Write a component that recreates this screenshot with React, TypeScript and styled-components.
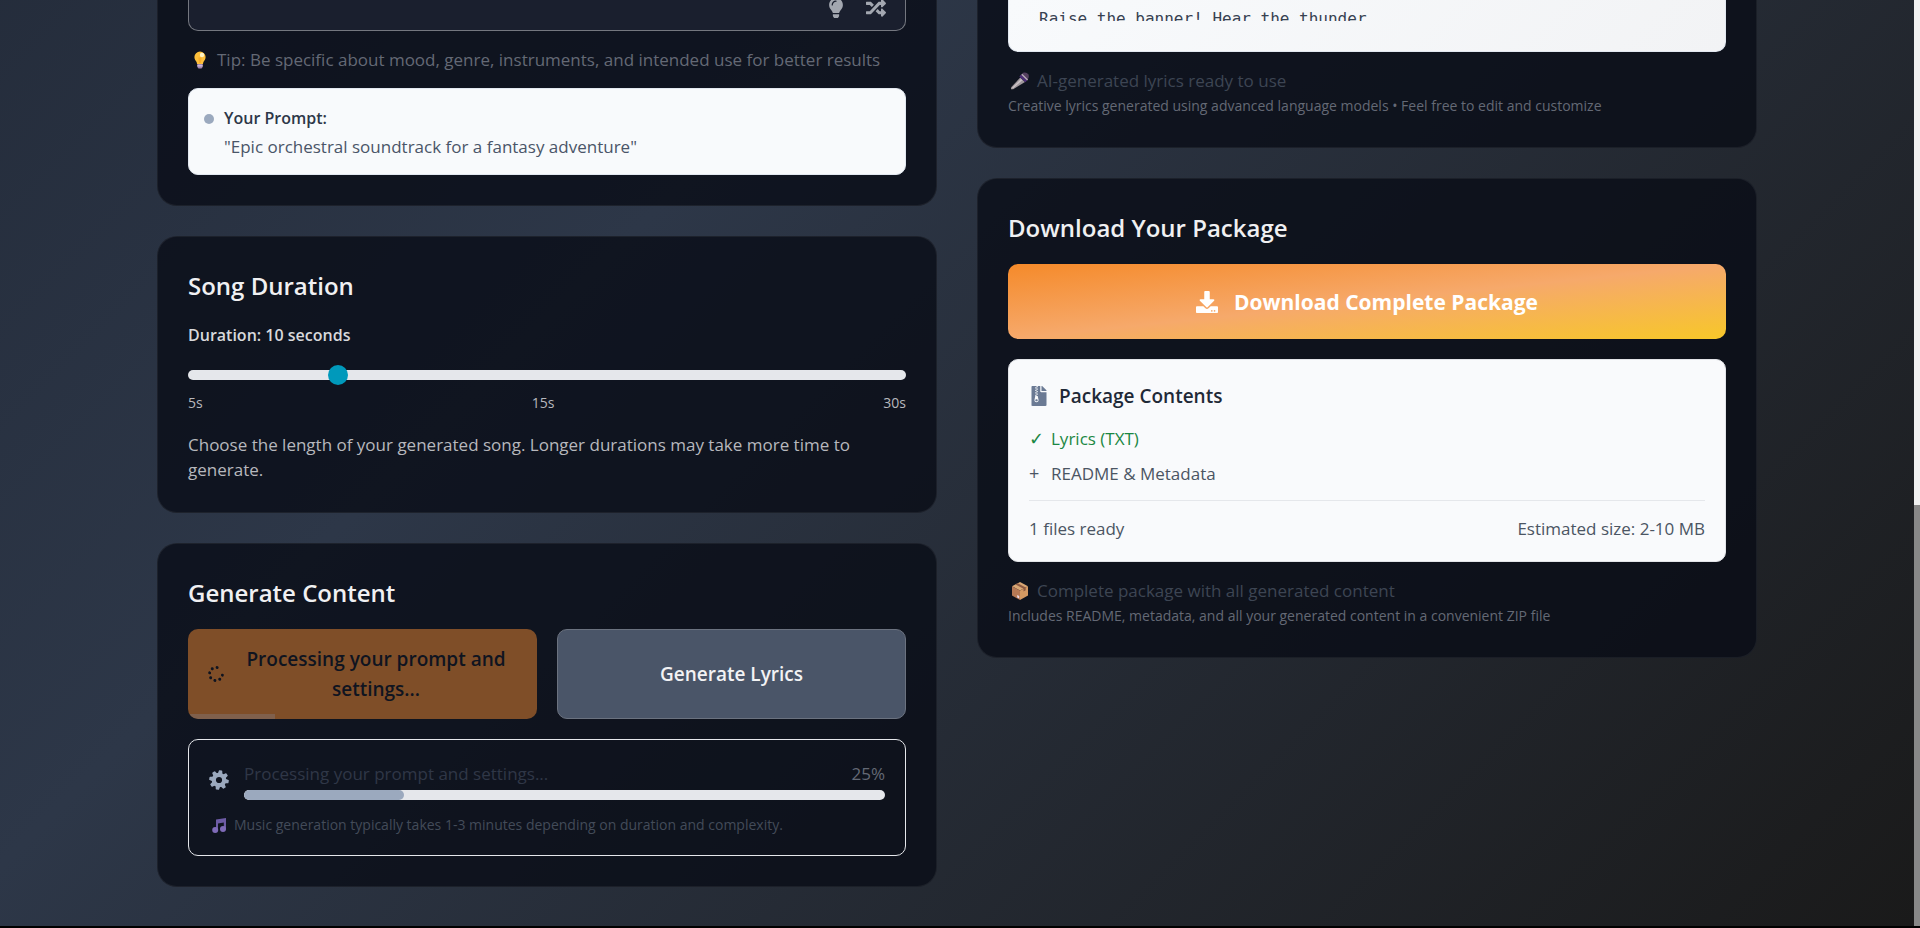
import React, { useState } from 'react';
import styled, { createGlobalStyle } from 'styled-components';
import { FaDownload, FaFileArchive, FaLightbulb, FaRandom, FaSpinner } from 'react-icons/fa';

const GlobalStyle = createGlobalStyle`
  *, *::before, *::after { box-sizing: border-box; }
  body {
    margin: 0;
    background: #000;
    color: #f0f0f2;
    font-family: 'Open Sans', 'Noto Sans', sans-serif;
    font-size: 17px;
    line-height: 27px;
  }
  h2, h3, p, ul { margin: 0; padding: 0; }
  button, input, textarea { font: inherit; margin: 0; }
`;

const Shell = styled.div`
  display: flex;
  height: 100vh;
  padding-bottom: 2px;
  overflow: hidden;
`;

const Page = styled.main`
  flex: 1;
  min-width: 0;
  padding: 0 40px 40px;
  background: linear-gradient(135deg, #1a202c 0%, #2d3748 50%, #1a1a1a 100%) left bottom / 100% 2032px;
`;

const ScrollTrack = styled.div`
  display: flex;
  flex-direction: column;
  justify-content: flex-end;
  width: 6px;
  background: #f1f1f1;
`;

const ScrollThumb = styled.div`
  height: 45.5%;
  background: #888;
`;

const Columns = styled.div`
  display: grid;
  grid-template-columns: repeat(2, minmax(0, 1fr));
  gap: 40px;
  align-items: start;
  max-width: 1600px;
  margin: 0 auto;
`;

const Column = styled.div`
  display: flex;
  flex-direction: column;
  gap: 30px;
`;

const Card = styled.section<{ $continued?: boolean }>`
  padding: ${(p) => (p.$continued ? '0 30px 30px' : '30px')};
  background: rgba(9, 12, 23, 0.8);
  border: 1px solid rgba(255, 255, 255, 0.06);
  border-top-width: ${(p) => (p.$continued ? '0' : '1px')};
  border-radius: ${(p) => (p.$continued ? '0 0 20px 20px' : '20px')};
`;

const CardTitle = styled.h2`
  margin-bottom: 18px;
  font-size: 24px;
  line-height: 37px;
  font-weight: 600;
`;

const PromptField = styled.div`
  position: relative;
  height: 31px;
`;

const PromptInput = styled.textarea`
  display: block;
  width: 100%;
  height: 100%;
  padding: 0 16px;
  resize: none;
  color: #f0f0f2;
  background: #1a1f2e;
  border: 1px solid #74777f;
  border-top: 0;
  border-radius: 0 0 10px 10px;
  outline: none;
`;

const PromptTools = styled.div`
  position: absolute;
  right: 20px;
  bottom: 13px;
  display: flex;
  gap: 20px;
`;

const ToolButton = styled.button`
  display: flex;
  justify-content: center;
  width: 20px;
  padding: 0;
  color: #a3a7b0;
  background: none;
  border: 0;
  font-size: 20px;
`;

const Note = styled.p<{ $color: string }>`
  display: flex;
  align-items: center;
  gap: 7px;
  margin-top: 15px;
  padding-left: 2px;
  color: ${(p) => p.$color};
`;

const SubNote = styled.p`
  margin-top: 1px;
  font-size: 14px;
  line-height: 22px;
  color: #646975;
`;

const PromptPreview = styled.div`
  display: flex;
  gap: 10px;
  margin-top: 15px;
  padding: 15px 15px 13px;
  line-height: 28px;
  color: #4a5568;
  background: #f8fafc;
  border: 1px solid #e2e8f0;
  border-radius: 10px;
`;

const Dot = styled.span`
  width: 10px;
  height: 10px;
  margin-top: 10px;
  border-radius: 50%;
  background: #9ba9be;
`;

const PreviewText = styled.div`
  display: flex;
  flex-direction: column;
  gap: 1px;
`;

const PreviewLabel = styled.span`
  font-size: 16px;
  font-weight: 600;
  color: #2d3748;
`;

const DurationLabel = styled.label`
  display: block;
  margin-bottom: 16px;
  font-size: 16px;
  font-weight: 600;
  color: #d8d9dc;
`;

const Slider = styled.input`
  display: block;
  width: 100%;
  height: 20px;
  appearance: none;
  background: none;
  &::-webkit-slider-runnable-track {
    height: 10px;
    border-radius: 5px;
    background: #e5e7eb;
  }
  &::-webkit-slider-thumb {
    appearance: none;
    width: 20px;
    height: 20px;
    margin-top: -5px;
    border-radius: 50%;
    background: #0099bb;
  }
`;

const Ticks = styled.div`
  display: flex;
  justify-content: space-between;
  margin-top: 7px;
  font-size: 14px;
  line-height: 21px;
  color: #b7b8bd;
`;

const Help = styled.p`
  margin-top: 19px;
  line-height: 25px;
  color: #b7b8bd;
`;

const Actions = styled.div`
  display: grid;
  grid-template-columns: 1fr 1fr;
  gap: 20px;
`;

const ActionButton = styled.button<{ $busy?: boolean }>`
  position: relative;
  display: flex;
  align-items: center;
  justify-content: center;
  gap: 11px;
  min-height: 90px;
  padding: 15px 20px;
  overflow: hidden;
  font-size: 19px;
  line-height: 30px;
  font-weight: 600;
  color: ${(p) => (p.$busy ? '#0f1420' : '#f2f2f4')};
  background: ${(p) => (p.$busy ? '#7f4e28' : '#4a5568')};
  border: ${(p) => (p.$busy ? '0' : '1px solid #6b727f')};
  border-radius: 10px;
`;

const BusyIcon = styled(FaSpinner)`
  flex: none;
  width: 16px;
  height: 16px;
  transform: rotate(10deg);
`;

const BusyLabel = styled.span`
  flex: 1;
`;

const ButtonProgress = styled.span`
  position: absolute;
  left: 0;
  bottom: 0;
  height: 5px;
  background: rgba(130, 125, 130, 0.4);
`;

const StatusBox = styled.div`
  margin-top: 20px;
  padding: 20px;
  border: 1px solid #e5e7eb;
  border-radius: 10px;
`;

const StatusRow = styled.div`
  display: flex;
  align-items: center;
  gap: 15px;
`;

const StatusBody = styled.div`
  flex: 1;
`;

const StatusLine = styled.div`
  display: flex;
  justify-content: space-between;
  margin-bottom: 3px;
  color: #646975;
`;

const StatusText = styled.span`
  font-weight: 500;
  color: #2f3747;
`;

const Bar = styled.div`
  height: 10px;
  overflow: hidden;
  border-radius: 5px;
  background: #e5e7eb;
`;

const BarFill = styled.div`
  height: 100%;
  border-radius: 5px;
  background: #9ba9be;
`;

const StatusHint = styled.p`
  display: flex;
  align-items: center;
  gap: 8px;
  margin-top: 15px;
  padding-left: 3px;
  font-size: 14px;
  line-height: 20px;
  color: #434b59;
`;

const LyricsBox = styled.div`
  padding: 0 30px 30px;
  background: linear-gradient(135deg, #f8fafc, #f2f3f5);
  border: 1px solid #e2e8f0;
  border-top: 0;
  border-radius: 0 0 10px 10px;
`;

const Lyrics = styled.pre`
  display: flex;
  align-items: flex-start;
  height: 21px;
  margin: 0;
  padding-top: 7px;
  overflow: hidden;
  font-family: 'DejaVu Sans Mono', 'Liberation Mono', monospace;
  font-size: 16px;
  line-height: 24px;
  color: #374151;
`;

const DownloadButton = styled.button`
  display: flex;
  align-items: center;
  justify-content: center;
  gap: 16px;
  width: 100%;
  height: 75px;
  font-size: 21px;
  line-height: 30px;
  font-weight: 700;
  color: #fff;
  background: linear-gradient(to bottom right, #f58a2a, #f6a96b, #f7c729);
  border: 0;
  border-radius: 10px;
`;

const DownloadIcon = styled(FaDownload)`
  width: 22px;
  height: 22px;
`;

const PackageBox = styled.div`
  margin-top: 20px;
  padding: 20px;
  color: #4b5563;
  background: #f9fafc;
  border: 1px solid #e2e4e8;
  border-radius: 10px;
`;

const PackageTitle = styled.h3`
  display: flex;
  align-items: center;
  gap: 10px;
  margin-bottom: 13px;
  font-size: 19px;
  line-height: 32px;
  font-weight: 600;
  color: #1f2937;
`;

const ZipIcon = styled(FaFileArchive)`
  width: 20px;
  height: 20px;
  color: #6b7a94;
`;

const FileList = styled.ul`
  display: flex;
  flex-direction: column;
  gap: 8px;
  list-style: none;
`;

const FileItem = styled.li<{ $ready?: boolean }>`
  display: flex;
  gap: 8px;
  color: ${(p) => (p.$ready ? '#1b8743' : 'inherit')};
`;

const Mark = styled.span`
  width: 14px;
  font-size: 18px;
  font-family: 'Open Sans', 'DejaVu Sans', sans-serif;
`;

const PackageFooter = styled.div`
  display: flex;
  justify-content: space-between;
  margin-top: 13px;
  padding-top: 15px;
  line-height: 25px;
  border-top: 1px solid #e5e7eb;
`;

const Glyph = styled.svg`
  flex: none;
`;

const TOOTH_ANGLES = [10, 55, 100, 145, 190, 235, 280, 325];

const GearGlyph = () => (
  <Glyph width="20" height="20" viewBox="0 0 20 20" aria-hidden="true">
    <g fill="#9ba9be">
      {TOOTH_ANGLES.map((angle) => (
        <path key={angle} d="M7.700 4 8.300.7Q8.400.2 9 .2h2q.6 0 .7.5L12.300 4z" transform={`rotate(${angle} 10 10)`} />
      ))}
    </g>
    <circle cx="10" cy="10" r="5.200" fill="none" stroke="#9ba9be" strokeWidth="4.200" />
  </Glyph>
);

const BulbGlyph = () => (
  <Glyph width="20" height="18" viewBox="0 0 20 18" aria-hidden="true">
    <path d="M10 0.5a5.6 5.6 0 0 0-5.6 5.6c0 2.2 1.2 3.3 2 4.6.5.8.6 1.5.6 2.3h6c0-.8.1-1.5.6-2.3.8-1.3 2-2.4 2-4.6A5.6 5.6 0 0 0 10 .5z" fill="#fdbf3b" />
    <path d="M8.3 6.5h3.4l-.8 5.5H9.1z" fill="#f39b1d" opacity=".55" />
    <circle cx="12" cy="4" r="2.2" fill="#fff3c4" />
    <path d="M7.3 13h5.4v3l-1.2 1.5h-3L7.3 16z" fill="#a487b0" />
    <path d="M7.3 14.3h5.4v1H7.3z" fill="#dccbe3" />
  </Glyph>
);

const MicGlyph = () => (
  <Glyph width="20" height="18" viewBox="0 0 20 18" aria-hidden="true">
    <path d="M1 15.5 10.3 5.5l4.7 4.4L3.2 17.2H1z" fill="#9f979c" />
    <path d="M2 15.8 11 7l1.3 1.2L3 16.5z" fill="#cdc5c9" />
    <path d="M10.3 4.2 13 .8q3.5-1 5.5 1.6.9 2.3-.4 4.3L15.2 10z" fill="#54405f" />
    <path d="m10.8 2.8 6.2 5.8-1.6 1.7-6-5.7z" fill="#4d2d78" />
    <path d="M12.2 1.7 18 7.4l-.8 1-5.9-5.6z" fill="#b9aebb" />
  </Glyph>
);

const BoxGlyph = () => (
  <Glyph width="20" height="18" viewBox="0 0 20 18" aria-hidden="true">
    <path d="M10 0 18 4.3 10 8.6 2 4.3z" fill="#d8a774" />
    <path d="M2 4.3 10 8.6V18l-8-4.5z" fill="#b67955" />
    <path d="M18 4.3 10 8.6V18l8-4.5z" fill="#d49962" />
    <path d="m5.5 2.4 8 4.3v2.8l2.2-1.2V5.5l-8-4.3z" fill="#8d5a42" />
    <path d="m7.2 13 2 1.1v2.5l-2-1.1z" fill="#ecd9e4" />
  </Glyph>
);

const NotesGlyph = () => (
  <Glyph width="14" height="15" viewBox="0 0 14 15" aria-hidden="true">
    <path d="M4 1.5 14 0v11.5h-2.2V4.6L6 5.5V13H4z" fill="#6d5ba5" />
    <circle cx="3.2" cy="12" r="3" fill="#7f6bb8" />
    <circle cx="11" cy="11" r="3" fill="#7f6bb8" />
  </Glyph>
);

const PROGRESS = 25;

export default function App() {
  const [duration, setDuration] = useState(10);
  return (
    <>
      <GlobalStyle />
      <Shell>
        <Page>
          <Columns>
            <Column>
              <Card $continued>
                <PromptField>
                  <PromptInput aria-label="Prompt" />
                  <PromptTools>
                    <ToolButton type="button" aria-label="Suggest an idea"><FaLightbulb /></ToolButton>
                    <ToolButton type="button" aria-label="Random prompt"><FaRandom /></ToolButton>
                  </PromptTools>
                </PromptField>
                <Note $color="#646975">
                  <BulbGlyph />
                  Tip: Be specific about mood, genre, instruments, and intended use for better results
                </Note>
                <PromptPreview>
                  <Dot />
                  <PreviewText>
                    <PreviewLabel>Your Prompt:</PreviewLabel>
                    <span>"Epic orchestral soundtrack for a fantasy adventure"</span>
                  </PreviewText>
                </PromptPreview>
              </Card>

              <Card>
                <CardTitle>Song Duration</CardTitle>
                <DurationLabel htmlFor="duration">Duration: {duration} seconds</DurationLabel>
                <Slider
                  id="duration"
                  type="range"
                  min={5}
                  max={30}
                  value={duration}
                  onChange={(e) => setDuration(Number(e.target.value))}
                />
                <Ticks>
                  <span>5s</span>
                  <span>15s</span>
                  <span>30s</span>
                </Ticks>
                <Help>
                  Choose the length of your generated song. Longer durations may take more time to generate.
                </Help>
              </Card>

              <Card>
                <CardTitle>Generate Content</CardTitle>
                <Actions>
                  <ActionButton type="button" disabled $busy>
                    <BusyIcon />
                    <BusyLabel>Processing your prompt and settings...</BusyLabel>
                    <ButtonProgress style={{ width: `${PROGRESS}%` }} />
                  </ActionButton>
                  <ActionButton type="button">Generate Lyrics</ActionButton>
                </Actions>
                <StatusBox>
                  <StatusRow>
                    <GearGlyph />
                    <StatusBody>
                      <StatusLine>
                        <StatusText>Processing your prompt and settings...</StatusText>
                        <span>{PROGRESS}%</span>
                      </StatusLine>
                      <Bar>
                        <BarFill style={{ width: `${PROGRESS}%` }} />
                      </Bar>
                    </StatusBody>
                  </StatusRow>
                  <StatusHint>
                    <NotesGlyph />
                    Music generation typically takes 1-3 minutes depending on duration and complexity.
                  </StatusHint>
                </StatusBox>
              </Card>
            </Column>

            <Column>
              <Card $continued>
                <LyricsBox>
                  <Lyrics>Raise the banner! Hear the thunder</Lyrics>
                </LyricsBox>
                <Note $color="#3d4553">
                  <MicGlyph />
                  AI-generated lyrics ready to use
                </Note>
                <SubNote>
                  Creative lyrics generated using advanced language models • Feel free to edit and customize
                </SubNote>
              </Card>

              <Card>
                <CardTitle>Download Your Package</CardTitle>
                <DownloadButton type="button">
                  <DownloadIcon />
                  Download Complete Package
                </DownloadButton>
                <PackageBox>
                  <PackageTitle>
                    <ZipIcon />
                    Package Contents
                  </PackageTitle>
                  <FileList>
                    <FileItem $ready><Mark>✓</Mark>Lyrics (TXT)</FileItem>
                    <FileItem><Mark>+</Mark>README &amp; Metadata</FileItem>
                  </FileList>
                  <PackageFooter>
                    <span>1 files ready</span>
                    <span>Estimated size: 2-10 MB</span>
                  </PackageFooter>
                </PackageBox>
                <Note $color="#3d4553">
                  <BoxGlyph />
                  Complete package with all generated content
                </Note>
                <SubNote>
                  Includes README, metadata, and all your generated content in a convenient ZIP file
                </SubNote>
              </Card>
            </Column>
          </Columns>
        </Page>
        <ScrollTrack>
          <ScrollThumb />
        </ScrollTrack>
      </Shell>
    </>
  );
}
